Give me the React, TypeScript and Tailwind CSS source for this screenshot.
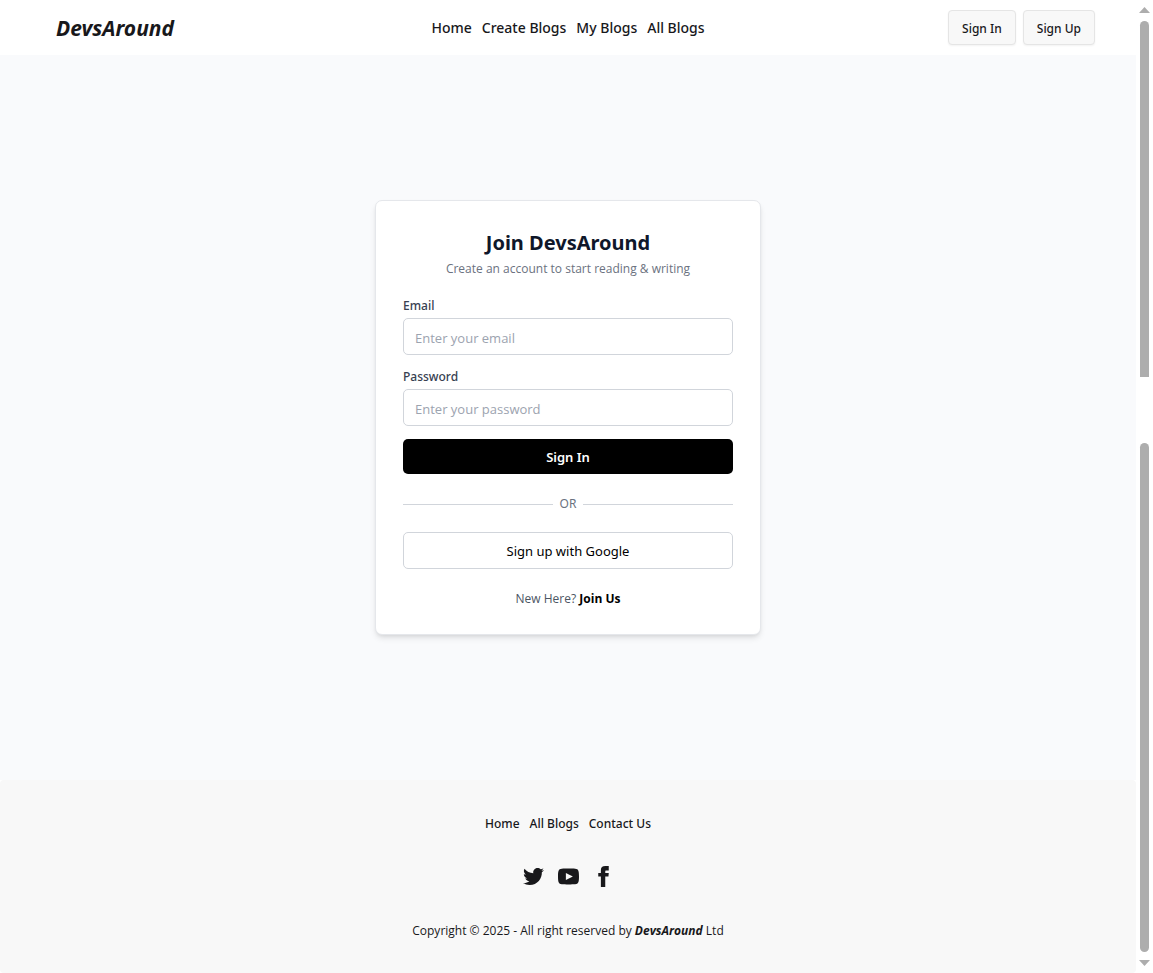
import React from "react";

const navLinks = ["Home", "Create Blogs", "My Blogs", "All Blogs"];
const footerLinks = ["Home", "All Blogs", "Contact Us"];

const socials = [
  {
    name: "Twitter",
    path: "M24 4.557c-.883.392-1.832.656-2.828.775 1.017-.609 1.798-1.574 2.165-2.724-.951.564-2.005.974-3.127 1.195-.897-.957-2.178-1.555-3.594-1.555-3.179 0-5.515 2.966-4.797 6.045-4.091-.205-7.719-2.165-10.148-5.144-1.29 2.213-.669 5.108 1.523 6.574-.806-.026-1.566-.247-2.229-.616-.054 2.281 1.581 4.415 3.949 4.89-.693.188-1.452.232-2.224.084.626 1.956 2.444 3.379 4.6 3.419-2.07 1.623-4.678 2.348-7.29 2.04 2.179 1.397 4.768 2.212 7.548 2.212 9.142 0 14.307-7.721 13.995-14.646.962-.695 1.797-1.562 2.457-2.549z",
  },
  {
    name: "YouTube",
    path: "M19.615 3.184c-3.604-.246-11.631-.245-15.23 0-3.897.266-4.356 2.62-4.385 8.816.029 6.185.484 8.549 4.385 8.816 3.6.245 11.626.246 15.23 0 3.897-.266 4.356-2.62 4.385-8.816-.029-6.185-.484-8.549-4.385-8.816zm-10.615 12.816v-8l8 3.993-8 4.007z",
  },
  {
    name: "Facebook",
    path: "M9 8h-3v4h3v12h5v-12h3.642l.358-4h-4v-1.667c0-.955.192-1.333 1.115-1.333h2.885v-5h-3.808c-3.596 0-5.192 1.583-5.192 4.615v3.385z",
  },
];

function Header() {
  const button =
    "h-[35px] rounded-[4px] border border-[#e5e5e5] bg-[#f8f8f8] px-[13px] pt-0.5 text-[12px] font-medium text-[#18181b] shadow-xs";
  return (
    <header className="flex h-[55px] items-center bg-white px-[41px]">
      <div className="flex flex-1 pt-0.5">
        <a href="#" className="pl-[15px] text-[21px] font-bold italic">
          DevsAround
        </a>
      </div>
      <nav className="flex gap-2.5 text-[14px] font-medium">
        {navLinks.map((label) => (
          <a key={label} href="#">
            {label}
          </a>
        ))}
      </nav>
      <div className="flex flex-1 justify-end gap-[7px]">
        <button type="button" className={button}>
          Sign In
        </button>
        <button type="button" className={button}>
          Sign Up
        </button>
      </div>
    </header>
  );
}

function Field({ id, label, type }: { id: string; label: string; type: string }) {
  return (
    <div className="flex flex-col gap-[3px]">
      <label htmlFor={id} className="text-[12px] leading-[18px] font-medium text-[#374151]">
        {label}
      </label>
      <input
        id={id}
        type={type}
        placeholder={`Enter your ${label.toLowerCase()}`}
        className="h-[37px] w-full rounded-[5px] border border-[#d1d5db] px-[11px] pt-0.5 font-['Open_Sans',sans-serif] text-[13px] placeholder:text-[#9ca3af]"
      />
    </div>
  );
}

function SignInCard() {
  return (
    <section className="w-full max-w-[386px] rounded-[7px] border border-[#e5e7eb] bg-white px-[27px] pt-7 pb-[26px] shadow-md">
      <h1 className="text-center text-[20px] leading-7 font-bold text-[#0f172a]">Join DevsAround</h1>
      <p className="mt-[3px] text-center font-['Open_Sans',sans-serif] text-[12px] leading-[18px] text-[#6b7280]">
        Create an account to start reading &amp; writing
      </p>
      <form className="mt-[19px] flex flex-col gap-[13px]" onSubmit={(e) => e.preventDefault()}>
        <Field id="email" label="Email" type="email" />
        <Field id="password" label="Password" type="password" />
        <button type="submit" className="h-[35px] rounded-[5px] bg-black pt-0.5 text-[13px] font-semibold text-white">
          Sign In
        </button>
      </form>
      <div className="mt-[21px] mb-[19px] flex items-center gap-[7px]">
        <span className="h-px flex-1 bg-[#d1d5db]" />
        <span className="text-[12px] leading-[18px] text-[#6b7280]">OR</span>
        <span className="h-px flex-1 bg-[#d1d5db]" />
      </div>
      <button
        type="button"
        className="h-[37px] w-full rounded-[5px] border border-[#d1d5db] pt-0.5 text-[13px] text-black"
      >
        Sign up with Google
      </button>
      <p className="mt-[21px] text-center font-['Open_Sans',sans-serif] text-[12px] leading-[18px] text-[#4b5563]">
        New Here?{" "}
        <a href="#" className="font-bold text-black">
          Join Us
        </a>
      </p>
    </section>
  );
}

function Footer() {
  return (
    <footer className="flex flex-col items-center rounded-[4px] bg-[#f8f8f8] pt-[35px] pb-[33px] text-[12px] leading-[18px]">
      <nav className="flex gap-2.5 font-medium">
        {footerLinks.map((label) => (
          <a key={label} href="#">
            {label}
          </a>
        ))}
      </nav>
      <nav className="mt-[33px] mb-[35px] flex gap-3.5">
        {socials.map(({ name, path }) => (
          <a key={name} href="#" aria-label={name}>
            <svg viewBox="0 0 24 24" className="size-[21px] fill-current">
              <path d={path} />
            </svg>
          </a>
        ))}
      </nav>
      <p className="font-['Open_Sans',sans-serif]">
        Copyright © 2025 - All right reserved by <span className="font-bold italic">DevsAround</span> Ltd
      </p>
    </footer>
  );
}

function ScrollRail() {
  return (
    <div aria-hidden="true" className="flex w-[17px] shrink-0 flex-col items-center bg-white pt-[7px] pb-[7px]">
      <svg viewBox="0 0 11 6" className="h-1.5 w-[11px] fill-[#adadad]">
        <path d="M5.500 0L11 6H0z" />
      </svg>
      <div className="mt-2 h-[356px] w-[9px] rounded-t-full bg-[#adadad]" />
      <div className="mt-[66px] w-[9px] flex-1 rounded-full bg-[#adadad]" />
      <svg viewBox="0 0 11 6" className="mt-2 h-1.5 w-[11px] fill-[#adadad]">
        <path d="M0 0H11L5.500 6z" />
      </svg>
    </div>
  );
}

export default function App() {
  return (
    <div className="flex min-h-screen bg-white font-['Noto_Sans','Open_Sans',sans-serif] text-[#18181b]">
      <div className="flex min-w-0 flex-1 flex-col">
        <Header />
        <main className="flex flex-1 items-center justify-center bg-[#f9fafc]">
          <SignInCard />
        </main>
        <Footer />
      </div>
      <ScrollRail />
    </div>
  );
}
